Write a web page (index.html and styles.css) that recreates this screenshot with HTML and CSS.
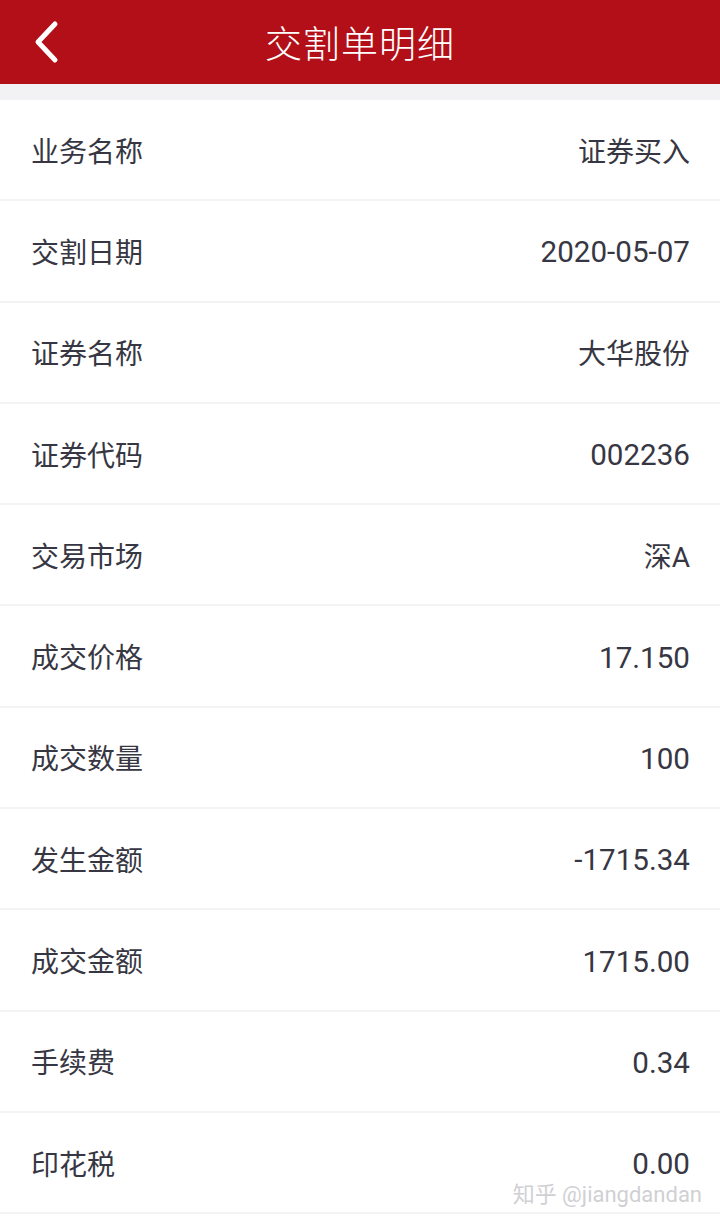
FILE: index.html
```html
<!DOCTYPE html>
<html lang="zh-CN">
<head>
  <meta charset="UTF-8" />
  <meta name="viewport" content="width=device-width, initial-scale=1.0"/>
  <title>交割单明细</title>
  <link rel="stylesheet" href="styles.css">
</head>
<body>
  <header class="top-bar">
    <a class="back" href="#">
      <svg width="30" height="44" viewBox="0 0 30 44">
        <path d="M25 4 L8 22 L25 40" fill="none" stroke="#fff" stroke-width="5" stroke-linecap="round" stroke-linejoin="round"/>
      </svg>
    </a>
    <h1>交割单明细</h1>
  </header>

  <div class="gap"></div>

  <ul class="detail-list">
    <li><span class="label">业务名称</span><span class="value">证券买入</span></li>
    <li><span class="label">交割日期</span><span class="value num">2020-05-07</span></li>
    <li><span class="label">证券名称</span><span class="value">大华股份</span></li>
    <li><span class="label">证券代码</span><span class="value num">002236</span></li>
    <li><span class="label">交易市场</span><span class="value">深A</span></li>
    <li><span class="label">成交价格</span><span class="value num">17.150</span></li>
    <li><span class="label">成交数量</span><span class="value num">100</span></li>
    <li><span class="label">发生金额</span><span class="value num">-1715.34</span></li>
    <li><span class="label">成交金额</span><span class="value num">1715.00</span></li>
    <li><span class="label">手续费</span><span class="value num">0.34</span></li>
    <li class="last"><span class="label">印花税</span><span class="value num">0.00</span><span class="watermark">知乎 @jiangdandan</span></li>
  </ul>
</body>
</html>
```

FILE: styles.css
```css
body {
  margin: 0;
  background: #fff;
  font-family: Roboto, "Noto Sans CJK SC", sans-serif;
  color: #373743;
}

.top-bar {
  height: 84px;
  background: #b30f18;
  display: flex;
  align-items: center;
  justify-content: center;
  position: relative;
}

.top-bar h1 {
  margin: 0;
  color: #fff;
  font-size: 37px;
  font-weight: 300;
  letter-spacing: 1px;
}

.back {
  position: absolute;
  left: 30px;
  top: 20px;
  display: block;
}

.gap {
  height: 16px;
  background: #f2f2f4;
}

.detail-list {
  list-style: none;
  margin: 0;
  padding: 0;
}

.detail-list li {
  height: 101.3px;
  box-sizing: border-box;
  border-bottom: 2px solid #f3f3f3;
  display: flex;
  align-items: center;
  justify-content: space-between;
  padding: 0 30px 0 31px;
  font-size: 28px;
  position: relative;
}

.detail-list .num {
  font-size: 29.6px;
  padding-top: 3px;
}

.watermark {
  position: absolute;
  right: 18px;
  bottom: 4px;
  font-size: 22px;
  color: #d0d0d4;
  text-shadow: 0 0 1px #fff;
}
```
